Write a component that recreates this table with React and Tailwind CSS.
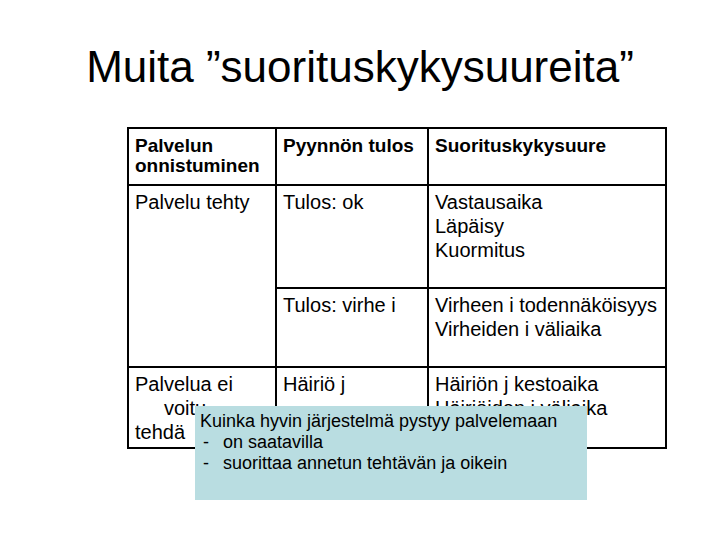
import React from 'react';

const cell = "border-2 border-black align-top text-[20px] leading-[24px] px-[6px] pt-[4px]";
const head = "border-2 border-black align-top text-[19px] leading-[20px] font-bold px-[6px] pt-[7px]";

export default function App() {
  return (
    <div className="relative w-[720px] h-[540px] bg-white text-black font-['Liberation_Sans',Arial,sans-serif]">
      {/* Title */}
      <h1 className="pt-[45px] text-center text-[44px] leading-[44px]">
        Muita ”suorituskykysuureita”
      </h1>

      {/* Table */}
      <div className="pl-[127px] pt-[38px]">
        <table className="w-[540px] border-collapse">
          <colgroup>
            <col className="w-[148px]" />
            <col className="w-[152px]" />
            <col />
          </colgroup>
          <tbody>
            <tr className="h-[57px]">
              <td className={head}>Palvelun<br />onnistuminen</td>
              <td className={head}>Pyynnön tulos</td>
              <td className={head}>Suorituskykysuure</td>
            </tr>
            <tr className="h-[103px]">
              <td rowSpan={2} className={cell}>Palvelu tehty</td>
              <td className={cell}>Tulos: ok</td>
              <td className={cell}>Vastausaika<br />Läpäisy<br />Kuormitus</td>
            </tr>
            <tr className="h-[79px]">
              <td className={cell}>Tulos: virhe i</td>
              <td className={cell}>Virheen i todennäköisyys<br />Virheiden i väliaika</td>
            </tr>
            <tr className="h-[81px]">
              <td className={cell}>
                Palvelua ei<br />
                <span className="pl-[29px]">voitu</span><br />
                tehdä
              </td>
              <td className={cell}>Häiriö j</td>
              <td className={cell}>Häiriön j kestoaika<br />Häiriöiden j väliaika</td>
            </tr>
          </tbody>
        </table>
      </div>

      {/* Callout box over the table */}
      <div className="absolute left-[195px] top-[406px] w-[392px] h-[94px] bg-[#b9dde1] px-[5px] pt-[5px] text-[18px] leading-[21px]">
        <div>Kuinka hyvin järjestelmä pystyy palvelemaan</div>
        <div className="flex">
          <span className="w-[23px] pl-[3px]">-</span>
          <span>on saatavilla</span>
        </div>
        <div className="flex">
          <span className="w-[23px] pl-[3px]">-</span>
          <span>suorittaa annetun tehtävän ja oikein</span>
        </div>
      </div>
    </div>
  );
}
